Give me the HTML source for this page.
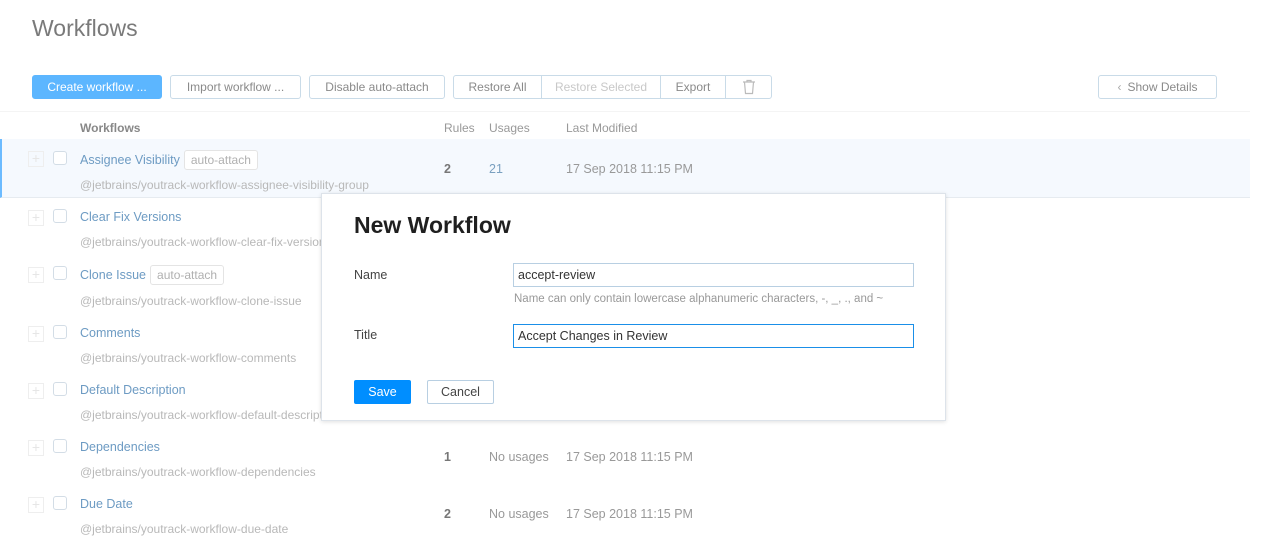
<!DOCTYPE html>
<html><head><meta charset="utf-8"><style>
*{box-sizing:border-box;margin:0;padding:0}
body{width:1266px;height:545px;overflow:hidden;background:#fff;font-family:"Liberation Sans",sans-serif;position:relative;color:#888}
.a{position:absolute;white-space:nowrap}
.btn{position:absolute;top:75px;height:24px;border:1px solid #c9dbe8;border-radius:3px;font-size:12px;color:#8a8a8a;text-align:center;line-height:22px;background:#fff}
.t{font-size:12.5px;color:#6d9bc3}
.s{font-size:12px;color:#b8b8b8}
.cb{position:absolute;left:53px;width:14px;height:14px;border:1px solid #d3dde6;border-radius:3px;background:#fff}
.pl{position:absolute;left:28px;width:16px;height:16px;border:1px solid #eee;color:#e6e6e6;font-size:14px;line-height:13px;text-align:center}
.tag{display:inline-block;border:1px solid #e4e4e4;border-radius:3px;padding:0 6px;font-size:12px;color:#b0b0b0;line-height:18px;margin-left:4px;background:#fff}
.num{font-size:12.5px;color:#777;font-weight:bold}
.c{font-size:12.5px;color:#999}
</style></head><body>
<div class="a" style="left:32px;top:15px;font-size:23px;color:#7a7a7a">Workflows</div>
<div class="btn" style="left:32px;width:130px;background:#5cb6ff;border-color:#5cb6ff;color:#fff">Create workflow ...</div>
<div class="btn" style="left:170px;width:131px">Import workflow ...</div>
<div class="btn" style="left:309px;width:136px">Disable auto-attach</div>
<div class="btn" style="left:453px;width:319px;padding:0">
<span class="a" style="left:0;width:87px;top:0">Restore All</span>
<span class="a" style="left:87px;width:119px;top:0;color:#c8c8c8;border-left:1px solid #c9dbe8;height:22px">Restore Selected</span>
<span class="a" style="left:206px;width:65px;top:0;border-left:1px solid #c9dbe8;height:22px">Export</span>
<span class="a" style="left:271px;width:46px;top:0;border-left:1px solid #c9dbe8;height:22px"><svg width="14" height="16" viewBox="0 0 14 16" style="margin-top:3px"><path d="M1 3h12M5 3V1.5h4V3M2.5 3l1 11.5h7l1-11.5" fill="none" stroke="#bbb" stroke-width="1.2"/></svg></span>
</div>
<div class="btn" style="left:1098px;width:119px"><span style="color:#aaa;margin-right:6px">&#8249;</span>Show Details</div>
<div class="a" style="left:0;top:111px;width:1250px;border-top:1px solid #f4f4f4"></div>
<div class="a" style="left:80px;top:121px;font-size:12px;font-weight:bold;color:#888">Workflows</div>
<div class="a" style="left:444px;top:121px;font-size:12px;color:#999">Rules</div>
<div class="a" style="left:489px;top:121px;font-size:12px;color:#999">Usages</div>
<div class="a" style="left:566px;top:121px;font-size:12px;color:#999">Last Modified</div>
<div class="a" style="left:0;top:139px;width:1250px;height:59px;background:#f5f9fe;border-left:2px solid #6cbbff;border-bottom:1px solid #e6ebf0"></div>

<div class="pl" style="top:151px">+</div><div class="cb" style="top:151px"></div>
<div class="a t" style="left:80px;top:150px">Assignee Visibility<span class="tag">auto-attach</span></div>
<div class="a s" style="left:80px;top:178px">@jetbrains/youtrack-workflow-assignee-visibility-group</div>
<div class="a num" style="left:444px;top:162px">2</div><div class="a c" style="left:489px;top:162px;color:#7aa0c0">21</div><div class="a c" style="left:566px;top:162px">17 Sep 2018 11:15 PM</div>

<div class="pl" style="top:210px">+</div><div class="cb" style="top:209px"></div>
<div class="a t" style="left:80px;top:210px">Clear Fix Versions</div>
<div class="a s" style="left:80px;top:235px">@jetbrains/youtrack-workflow-clear-fix-versions</div>

<div class="pl" style="top:267px">+</div><div class="cb" style="top:266px"></div>
<div class="a t" style="left:80px;top:265px">Clone Issue<span class="tag">auto-attach</span></div>
<div class="a s" style="left:80px;top:294px">@jetbrains/youtrack-workflow-clone-issue</div>

<div class="pl" style="top:326px">+</div><div class="cb" style="top:325px"></div>
<div class="a t" style="left:80px;top:326px">Comments</div>
<div class="a s" style="left:80px;top:351px">@jetbrains/youtrack-workflow-comments</div>

<div class="pl" style="top:383px">+</div><div class="cb" style="top:382px"></div>
<div class="a t" style="left:80px;top:383px">Default Description</div>
<div class="a s" style="left:80px;top:408px">@jetbrains/youtrack-workflow-default-description</div>

<div class="pl" style="top:440px">+</div><div class="cb" style="top:439px"></div>
<div class="a t" style="left:80px;top:440px">Dependencies</div>
<div class="a s" style="left:80px;top:465px">@jetbrains/youtrack-workflow-dependencies</div>
<div class="a num" style="left:444px;top:450px">1</div><div class="a c" style="left:489px;top:450px">No usages</div><div class="a c" style="left:566px;top:450px">17 Sep 2018 11:15 PM</div>

<div class="pl" style="top:497px">+</div><div class="cb" style="top:496px"></div>
<div class="a t" style="left:80px;top:497px">Due Date</div>
<div class="a s" style="left:80px;top:522px">@jetbrains/youtrack-workflow-due-date</div>
<div class="a num" style="left:444px;top:507px">2</div><div class="a c" style="left:489px;top:507px">No usages</div><div class="a c" style="left:566px;top:507px">17 Sep 2018 11:15 PM</div>

<div class="a" style="left:321px;top:193px;width:625px;height:228px;background:#fff;border:1px solid #dde3ea;box-shadow:0 1px 4px rgba(0,0,0,.12)">
<div class="a" style="left:32px;top:18px;font-size:23px;font-weight:bold;color:#1f1f1f">New Workflow</div>
<div class="a" style="left:32px;top:74px;font-size:12.5px;color:#444">Name</div>
<div class="a" style="left:191px;top:69px;width:401px;height:24px;border:1px solid #b8cfe2;font-size:12.5px;color:#333;line-height:22px;padding-left:4px">accept-review</div>
<div class="a" style="left:192px;top:99px;font-size:11.5px;color:#999">Name can only contain lowercase alphanumeric characters, -, _, ., and ~</div>
<div class="a" style="left:32px;top:134px;font-size:12.5px;color:#444">Title</div>
<div class="a" style="left:191px;top:130px;width:401px;height:24px;border:1px solid #1a8fe8;font-size:12.5px;color:#333;line-height:22px;padding-left:4px">Accept Changes in Review</div>
<div class="a" style="left:32px;top:186px;width:57px;height:24px;background:#008eff;border-radius:2px;color:#fff;font-size:12.5px;text-align:center;line-height:24px">Save</div>
<div class="a" style="left:105px;top:186px;width:67px;height:24px;border:1px solid #b8cfe2;border-radius:2px;color:#444;font-size:12.5px;text-align:center;line-height:22px">Cancel</div>
</div>
</body></html>
